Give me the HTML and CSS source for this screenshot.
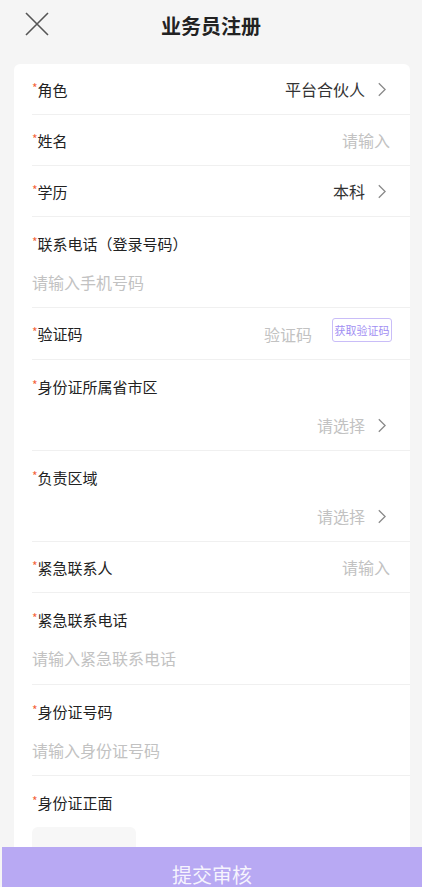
FILE: index.html
```html
<!DOCTYPE html>
<html lang="zh-CN">
<head>
  <meta charset="UTF-8" />
  <meta name="viewport" content="width=device-width, initial-scale=1" />
  <title>业务员注册</title>
  <link rel="stylesheet" href="styles.css">
</head>
<body>

<div class="header">
  <div class="close">
    <svg width="24" height="24" viewBox="0 0 24 24">
      <path d="M1 1 L23 23 M23 1 L1 23" stroke="#555" stroke-width="1.6" fill="none" />
    </svg>
  </div>
  <h1>业务员注册</h1>
  <div></div>
</div>

<div class="card">
  <div class="row">
    <span class="label"><i>*</i>角色</span>
    <span class="value">平台合伙人<svg class="arrow" viewBox="0 0 10 16"><path d="M2 1 L9 8 L2 15" /></svg></span>
  </div>
  <div class="row">
    <span class="label"><i>*</i>姓名</span>
    <span class="value hint">请输入</span>
  </div>
  <div class="row">
    <span class="label"><i>*</i>学历</span>
    <span class="value">本科<svg class="arrow" viewBox="0 0 10 16"><path d="M2 1 L9 8 L2 15" /></svg></span>
  </div>
  <div class="row stack">
    <span class="label"><i>*</i>联系电话（登录号码）</span>
    <span class="value hint left">请输入手机号码</span>
  </div>
  <div class="row tall">
    <span class="label"><i>*</i>验证码</span>
    <span class="value hint">验证码<button class="code-btn">获取验证码</button></span>
  </div>
  <div class="row stack">
    <span class="label"><i>*</i>身份证所属省市区</span>
    <span class="value hint">请选择<svg class="arrow" viewBox="0 0 10 16"><path d="M2 1 L9 8 L2 15" /></svg></span>
  </div>
  <div class="row stack">
    <span class="label"><i>*</i>负责区域</span>
    <span class="value hint">请选择<svg class="arrow" viewBox="0 0 10 16"><path d="M2 1 L9 8 L2 15" /></svg></span>
  </div>
  <div class="row">
    <span class="label"><i>*</i>紧急联系人</span>
    <span class="value hint">请输入</span>
  </div>
  <div class="row stack tall">
    <span class="label"><i>*</i>紧急联系电话</span>
    <span class="value hint left">请输入紧急联系电话</span>
  </div>
  <div class="row stack">
    <span class="label"><i>*</i>身份证号码</span>
    <span class="value hint left">请输入身份证号码</span>
  </div>
  <div class="upload-row">
    <span class="label"><i>*</i>身份证正面</span>
    <div class="upload"></div>
  </div>
</div>

<div class="submit">提交审核</div>

</body>
</html>
```

FILE: styles.css
```css
body {
  margin: 0;
  background: #f5f5f5;
  font-family: "Noto Sans CJK SC", "Noto Sans", sans-serif;
  color: #333;
  padding-bottom: 60px;
}

.header {
  display: grid;
  grid-template-columns: 1fr auto 1fr;
  align-items: center;
  height: 50px;
}

.close {
  padding-left: 25px;
  display: flex;
  align-items: center;
  margin-top: -3px;
}

.header h1 {
  margin: 0;
  font-size: 20px;
  font-weight: bold;
  color: #222;
}

.card {
  background: #fff;
  border-radius: 6px;
  margin: 14px 12px 0 14px;
  padding-left: 18px;
}

.row {
  display: flex;
  align-items: center;
  justify-content: space-between;
  height: 50px;
  border-bottom: 1px solid #f0f0f0;
  padding-right: 20px;
}

.row.tall {
  height: 51px;
}

.row.stack {
  flex-direction: column;
  align-items: stretch;
  justify-content: flex-start;
  height: 90px;
}

.row.stack.tall {
  height: 91px;
}

.row.stack .label {
  height: 50px;
  line-height: 50px;
}

.row.stack .value {
  justify-content: flex-end;
  line-height: 30px;
}

.row.stack .value.left {
  justify-content: flex-start;
}

.label {
  font-size: 15px;
  color: #222;
}

.label i {
  font-style: normal;
  color: #f4633a;
  font-size: 12px;
  vertical-align: 3px;
}

.value {
  display: flex;
  align-items: center;
  font-size: 16px;
  color: #333;
}

.value.hint {
  color: #c2c2c2;
}

.arrow {
  width: 9px;
  height: 15px;
  margin-left: 12px;
  margin-right: 4px;
}

.arrow path {
  fill: none;
  stroke: #888;
  stroke-width: 1.4;
}

.code-btn {
  margin-left: 20px;
  margin-right: -2px;
  width: 60px;
  height: 24px;
  padding: 0;
  border: 1px solid #c9bdf8;
  border-radius: 3px;
  background: #fff;
  color: #a18ef3;
  font-family: inherit;
  font-size: 11px;
  margin-top: -8px;
}

.upload-row {
  padding-bottom: 40px;
}

.upload-row .label {
  display: block;
  height: 50px;
  line-height: 50px;
}

.upload {
  width: 104px;
  height: 104px;
  margin-top: 1px;
  background: #f7f7f7;
  border-radius: 6px;
}

.submit {
  position: fixed;
  left: 2px;
  right: 0;
  bottom: -16px;
  height: 40px;
  padding-top: 16px;
  background: #b8a9f3;
  color: rgba(255, 255, 255, 0.88);
  font-size: 20px;
  text-align: center;
  line-height: 24px;
}
```
